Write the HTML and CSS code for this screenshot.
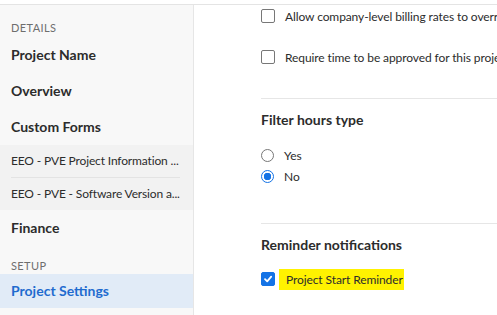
FILE: index.html
```
<!DOCTYPE html>
<html lang="en">
<head>
  <meta charset="UTF-8">
  <title>Project Settings</title>
  <link rel="stylesheet" href="styles.css">
</head>
<body>
  <div class="page">
    <!-- Sidebar -->
    <div class="sidebar">
      <div class="section-label first">DETAILS</div>
      <a href="#" class="nav-item">Project Name</a>
      <a href="#" class="nav-item">Overview</a>
      <a href="#" class="nav-item">Custom Forms</a>
      <div class="sub-group">
        <a href="#" class="sub-item">EEO - PVE Project Information ...</a>
        <a href="#" class="sub-item">EEO - PVE - Software Version a...</a>
      </div>
      <a href="#" class="nav-item">Finance</a>
      <div class="section-label">SETUP</div>
      <a href="#" class="nav-item active">Project Settings</a>
    </div>

    <!-- Settings -->
    <div class="content">
      <div class="block top">
        <label class="option">
          <span class="box"></span>
          <span>Allow company-level billing rates to override project rates</span>
        </label>
        <label class="option">
          <span class="box"></span>
          <span>Require time to be approved for this project</span>
        </label>
      </div>

      <div class="block mid">
        <h3>Filter hours type</h3>
        <label class="radio-row">
          <span class="radio"></span>
          <span>Yes</span>
        </label>
        <label class="radio-row">
          <span class="radio on"></span>
          <span>No</span>
        </label>
      </div>

      <div class="block last">
        <h3>Reminder notifications</h3>
        <label class="option checked">
          <span class="box on">
            <svg width="10" height="10" viewBox="0 0 10 10"><path d="M2 5.2 L4.2 7.4 L8.2 2.6" fill="none" stroke="#fff" stroke-width="1.8" stroke-linecap="round" stroke-linejoin="round"/></svg>
          </span>
          <span class="highlight">Project Start Reminder</span>
        </label>
      </div>
    </div>
  </div>
</body>
</html>
```

FILE: styles.css
```
body {
  margin: 0;
  padding-top: 4px;
  font-family: Lato, "Open Sans", sans-serif;
  color: #2c2c2c;
  background: #ffffff;
  overflow: hidden;
}

.page {
  display: flex;
  border-top: 1px solid #e4e4e4;
  height: 310px;
}

/* Sidebar */
.sidebar {
  width: 193px;
  flex-shrink: 0;
  background: #f8f8f8;
  border-right: 1px solid #e6e6e6;
  display: flex;
  flex-direction: column;
}

.section-label {
  font-size: 11px;
  letter-spacing: 0.4px;
  color: #6e6e6e;
  padding: 0 11px;
  height: 17px;
  line-height: 17px;
  margin-top: 11px;
}

.section-label.first {
  margin-top: 14px;
  height: 18px;
  line-height: 18px;
}

.nav-item {
  display: block;
  font-size: 14px;
  font-weight: bold;
  color: #2c2c2c;
  text-decoration: none;
  padding: 0 11px;
  height: 36px;
  line-height: 36px;
}

.nav-item.active {
  background: #e1ebf7;
  color: #1f6bcf;
  height: 34px;
  line-height: 34px;
}

.sub-group {
  background: #f2f2f2;
  padding: 0 13px 0 11px;
}

.sub-item {
  display: block;
  font-size: 12px;
  letter-spacing: -0.15px;
  color: #2c2c2c;
  text-decoration: none;
  height: 32px;
  line-height: 32px;
  white-space: nowrap;
}

.sub-item + .sub-item {
  border-top: 1px solid #e3e3e3;
}

/* Content */
.content {
  flex: 1;
  padding-left: 67px;
  white-space: nowrap;
  overflow: hidden;
}

.block {
  border-bottom: 1px solid #e6e6e6;
}

.block.top {
  padding-top: 1px;
  padding-bottom: 31px;
}

.block.mid {
  padding-bottom: 36px;
}

.block.last {
  border-bottom: none;
}

h3 {
  margin: 0;
  padding-top: 12px;
  font-size: 14px;
  font-weight: bold;
  color: #2c2c2c;
  line-height: 18px;
}

.option {
  display: flex;
  align-items: center;
  gap: 10px;
  font-size: 12px;
  letter-spacing: -0.1px;
  height: 20px;
  margin-bottom: 21px;
}

.option:last-child {
  margin-bottom: 0;
}

.block.last .option {
  margin-top: 15px;
}

.box {
  width: 12px;
  height: 12px;
  border: 1px solid #777777;
  border-radius: 2px;
  flex-shrink: 0;
  display: flex;
  align-items: center;
  justify-content: center;
}

.box.on {
  background: #1473e6;
  border-color: #1473e6;
}

.highlight {
  background: #fff200;
  padding: 3px 1px 3px 7px;
  margin-left: -6px;
}

.radio-row {
  display: flex;
  align-items: center;
  gap: 10px;
  font-size: 12px;
  height: 21px;
}

.radio-row:first-of-type {
  margin-top: 16px;
}

.radio {
  width: 11px;
  height: 11px;
  border: 1px solid #777777;
  border-radius: 50%;
  flex-shrink: 0;
  box-sizing: content-box;
}

.radio.on {
  border: 1px solid #1473e6;
  background: radial-gradient(circle, #1473e6 0 3.5px, #ffffff 4px);
}
```
